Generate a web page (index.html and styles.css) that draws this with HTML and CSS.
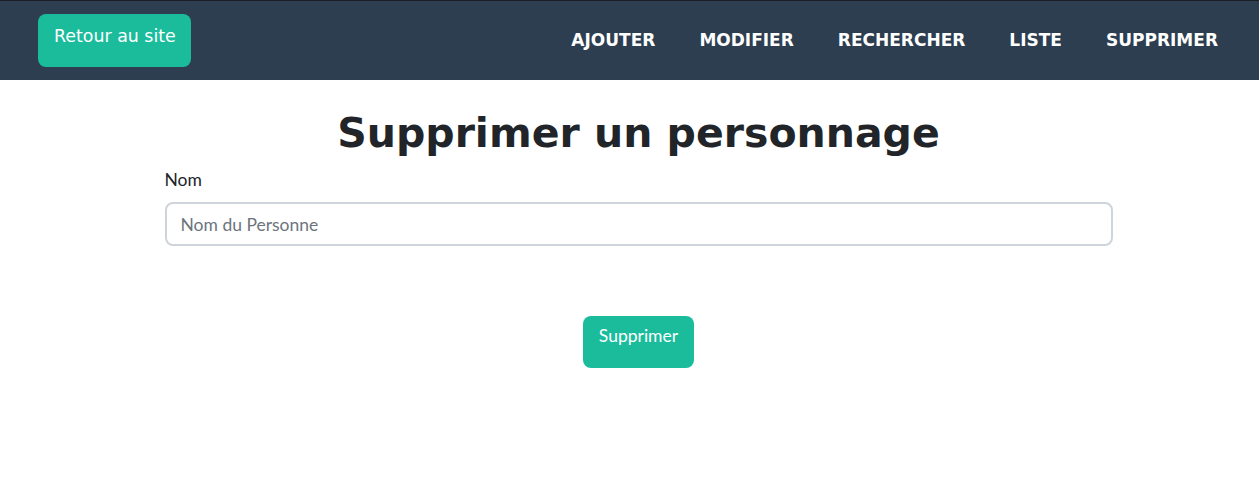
FILE: index.html
```html
<!DOCTYPE html>
<html lang="fr">
<head>
<meta charset="utf-8">
<title>Supprimer un personnage</title>
<link rel="stylesheet" href="styles.css">
</head>
<body>
<header class="topbar">
  <a class="back-btn" href="#">Retour au site</a>
  <nav class="nav">
    <a href="#">AJOUTER</a>
    <a href="#">MODIFIER</a>
    <a href="#">RECHERCHER</a>
    <a href="#">LISTE</a>
    <a href="#">SUPPRIMER</a>
  </nav>
</header>
<main class="main">
  <form class="form">
    <h1 class="title">Supprimer un personnage</h1>
    <label class="label" for="nom">Nom</label>
    <input class="input" id="nom" type="text" placeholder="Nom du Personne">
    <div class="actions">
      <button class="submit" type="button">Supprimer</button>
    </div>
  </form>
</main>
</body>
</html>
```

FILE: styles.css
```css
* { box-sizing: border-box; }
html, body { margin: 0; padding: 0; background: #fff; }
body { font-family: "Lato", "Liberation Sans", sans-serif; color: #212529; }

.topbar {
  height: 80px;
  background: #2c3e50;
  border-top: 1px solid #1b1f24;
  display: flex;
  align-items: flex-start;
  justify-content: space-between;
  padding: 13px 41px 0 38px;
}
.back-btn {
  display: block;
  background: #1abc9c;
  color: #fff;
  text-decoration: none;
  font-family: "DejaVu Sans", sans-serif;
  font-size: 17.4px;
  line-height: 20px;
  padding: 12px 15px 21px 16px;
  border-radius: 8px;
}
.nav {
  display: flex;
  gap: 44px;
  padding-top: 16px;
}
.nav a {
  color: #fff;
  text-decoration: none;
  font-family: "DejaVu Sans", sans-serif;
  font-weight: 700;
  font-size: 17px;
  line-height: 20px;
}

.main { padding-left: 18px; }
.form {
  width: 948px;
  margin: 0 auto;
  display: flex;
  flex-direction: column;
}
.title {
  margin: 27px 0 0;
  text-align: center;
  font-family: "DejaVu Sans", sans-serif;
  font-weight: 700;
  font-size: 41px;
  line-height: 52px;
  color: #212529;
}
.label {
  margin-top: 9px;
  font-size: 17.5px;
  line-height: 24px;
}
.input {
  margin-top: 10px;
  height: 44px;
  width: 100%;
  border: 2px solid #ced4da;
  border-radius: 8px;
  padding: 0 14px;
  font-family: "Lato", sans-serif;
  font-size: 17.5px;
  color: #212529;
  outline: none;
}
.input::placeholder { color: #6c757d; }
.actions {
  display: flex;
  justify-content: center;
  margin-top: 70px;
}
.submit {
  background: #1abc9c;
  color: #fff;
  border: none;
  border-radius: 8px;
  font-family: "Lato", sans-serif;
  font-size: 17.5px;
  line-height: 20px;
  padding: 10px 16px 22px;
  cursor: pointer;
}
```
